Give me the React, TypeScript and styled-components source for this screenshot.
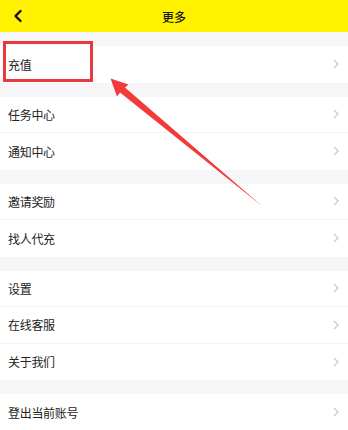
import React from "react";
import styled, { createGlobalStyle } from "styled-components";

const GlobalStyle = createGlobalStyle`
  html, body {
    margin: 0;
    padding: 0;
    background: #f6f6f8;
    font-family: "Noto Sans CJK SC", "Noto Sans", sans-serif;
  }
`;

const Page = styled.div`
  position: relative;
  width: 348px;
  height: 430px;
  overflow: hidden;
  background: #f6f6f8;
`;

const Header = styled.header`
  height: 32px;
  background: #fff100;
  display: flex;
  align-items: center;
  justify-content: center;
  position: relative;
`;

const Back = styled.button`
  position: absolute;
  left: 10px;
  top: 8px;
  width: 16px;
  height: 16px;
  padding: 0;
  border: 0;
  background: none;
  display: flex;
  align-items: center;
  justify-content: center;
`;

const Title = styled.h1`
  margin: 0;
  font-size: 12px;
  font-weight: 500;
  color: #1a1a1a;
`;

const Group = styled.section`
  margin-top: 14px;
  background: #ffffff;
`;

const Row = styled.div<{ $last?: boolean }>`
  height: 36.5px;
  box-sizing: border-box;
  padding: 0 9px 0 8px;
  display: flex;
  align-items: center;
  justify-content: space-between;
  border-bottom: ${(p) => (p.$last ? "none" : "1px solid #f4f4f4")};
`;

const Label = styled.span`
  font-size: 12px;
  color: #222;
  letter-spacing: -0.3px;
`;

// red annotation drawn over the page
const Overlay = styled.svg`
  position: absolute;
  left: 0;
  top: 0;
  pointer-events: none;
`;

const Chevron = () => (
  <svg width="6" height="10" viewBox="0 0 6 10">
    <path d="M1 1 L5 5 L1 9" fill="none" stroke="#c9c9c9" strokeWidth="1.2" />
  </svg>
);

const groups: string[][] = [
  ["充值"],
  ["任务中心", "通知中心"],
  ["邀请奖励", "找人代充"],
  ["设置", "在线客服", "关于我们"],
  ["登出当前账号"],
];

const App: React.FC = () => (
  <>
    <GlobalStyle />
    <Page>
      <Header>
        <Back aria-label="back">
          <svg width="10" height="14" viewBox="0 0 10 14">
            <path d="M7.5 2 L2.5 7 L7.5 12" fill="none" stroke="#111" strokeWidth="2.4" strokeLinecap="round" strokeLinejoin="round" />
          </svg>
        </Back>
        <Title>更多</Title>
      </Header>
      {groups.map((items, gi) => (
        <Group key={gi}>
          {items.map((item, i) => (
            <Row key={item} $last={i === items.length - 1}>
              <Label>{item}</Label>
              <Chevron />
            </Row>
          ))}
        </Group>
      ))}
      <Overlay width="348" height="430" viewBox="0 0 348 430">
        <rect x="4.5" y="42.5" width="87" height="38" fill="none" stroke="#e8393c" strokeWidth="3" />
        <polygon points="110.5,78.5 128.5,84.5 125,87.5 262,206 120,92.5 117,96.5" fill="#f23a3a" />
      </Overlay>
    </Page>
  </>
);

export default App;
